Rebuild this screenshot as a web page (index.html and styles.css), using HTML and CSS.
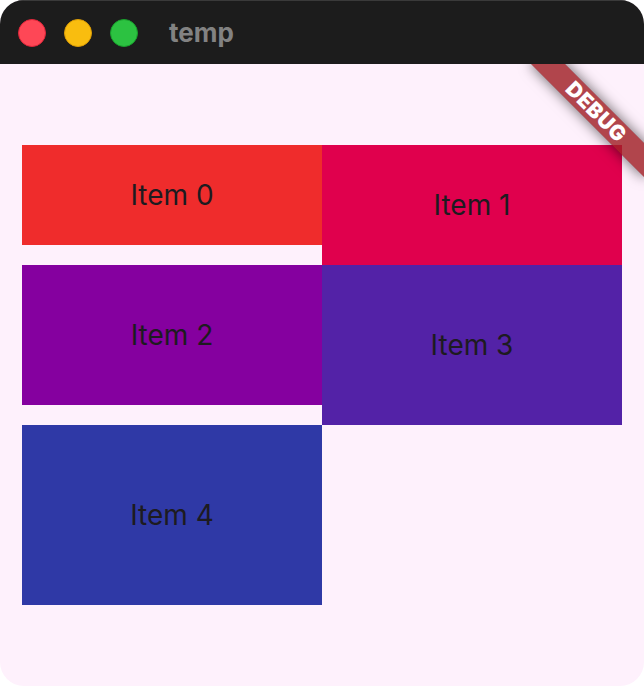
FILE: index.html
```html
<!DOCTYPE html>
<html>
<head>
  <title>temp</title>
  <link rel="stylesheet" href="styles.css">
</head>
<body>
  <div class="window">
    <div class="titlebar">
      <div class="lights">
        <span class="light close"></span>
        <span class="light minimize"></span>
        <span class="light zoom"></span>
      </div>
      <div class="title">temp</div>
    </div>

    <div class="content">
      <div class="banner">DEBUG</div>

      <div class="grid">
        <div class="column">
          <div class="tile red h100">Item 0</div>
          <div class="tile purple h140">Item 2</div>
          <div class="tile indigo h180">Item 4</div>
        </div>
        <div class="column tight">
          <div class="tile pink h120">Item 1</div>
          <div class="tile deep-purple h160">Item 3</div>
        </div>
      </div>
    </div>
  </div>
</body>
</html>
```

FILE: styles.css
```css
html, body {
  margin: 0;
  background: #ffffff;
}
body {
  font-family: Inter, "Noto Sans", sans-serif;
}
.window {
  width: 644px;
  height: 686px;
  border-radius: 24px;
  overflow: hidden;
  display: flex;
  flex-direction: column;
  background: #fef1fc;
}
.titlebar {
  height: 64px;
  flex: none;
  background: #1c1c1c;
  border-top: 1px solid #3a3a3a;
  box-sizing: border-box;
  display: flex;
  align-items: center;
  padding-left: 18px;
}
.lights {
  display: flex;
  gap: 18px;
}
.light {
  width: 28px;
  height: 28px;
  border-radius: 50%;
  box-sizing: border-box;
}
.close {
  background: #fe4756;
  border: 1px solid #e0263a;
}
.minimize {
  background: #f9bd0f;
  border: 1px solid #dc9d06;
}
.zoom {
  background: #2cc241;
  border: 1px solid #18a02c;
}
.title {
  margin-left: 31px;
  color: #828282;
  font-size: 26px;
  font-weight: 700;
}
.content {
  position: relative;
  flex: 1;
  overflow: hidden;
}
.banner {
  position: absolute;
  left: 516px;
  top: 36px;
  width: 160px;
  height: 24px;
  line-height: 24px;
  transform: rotate(45deg);
  background: rgba(160, 30, 36, 0.82);
  box-shadow: 0 0 14px rgba(0, 0, 0, 0.6);
  color: #ffffff;
  font-size: 21px;
  font-weight: 900;
  text-align: center;
  letter-spacing: 0.5px;
  z-index: 2;
}
.grid {
  display: flex;
  padding: 81px 22px 0;
}
.column {
  width: 300px;
  display: flex;
  flex-direction: column;
  gap: 20px;
}
.column.tight {
  gap: 0;
}
.tile {
  display: flex;
  align-items: center;
  justify-content: center;
  color: #1d1b20;
  font-size: 28px;
}
.h100 { height: 100px; }
.h120 { height: 120px; }
.h140 { height: 140px; }
.h160 { height: 160px; }
.h180 { height: 180px; }
.red { background: #ef2c2c; }
.pink { background: #e0004d; }
.purple { background: #85009f; }
.deep-purple { background: #5322a7; }
.indigo { background: #2f39a6; }
```
